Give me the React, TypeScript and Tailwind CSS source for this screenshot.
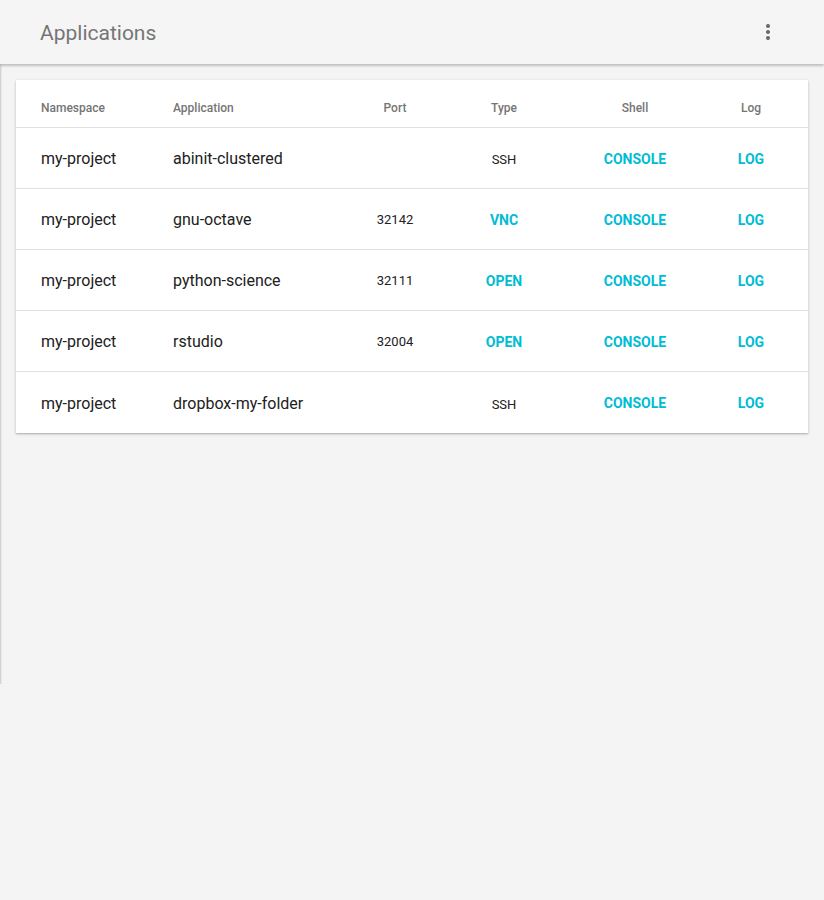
const rows = [
  { ns: "my-project", app: "abinit-clustered", port: "", type: "SSH" },
  { ns: "my-project", app: "gnu-octave", port: "32142", type: "VNC" },
  { ns: "my-project", app: "python-science", port: "32111", type: "OPEN" },
  { ns: "my-project", app: "rstudio", port: "32004", type: "OPEN" },
  { ns: "my-project", app: "dropbox-my-folder", port: "", type: "SSH" },
];

function MoreVert() {
  return (
    <svg width="24" height="24" viewBox="0 0 24 24" fill="#666">
      <circle cx="12" cy="6" r="2" />
      <circle cx="12" cy="12" r="2" />
      <circle cx="12" cy="18" r="2" />
    </svg>
  );
}

export default function App() {
  return (
    <div
      className="min-h-[900px] bg-[#f4f4f4]"
      style={{ fontFamily: "Roboto, 'Liberation Sans', sans-serif" }}
    >
      <div className="h-[684px] shadow-[inset_2px_0_2px_-1px_rgba(0,0,0,0.18)]">
        {/* Header */}
        <header className="relative z-10 flex h-16 items-center justify-between bg-[#f5f5f5] pl-10 pr-11 shadow-[0_2px_2px_rgba(0,0,0,0.14),0_1px_4px_rgba(0,0,0,0.12)]">
          <h1 className="pt-[3px] text-[21px] font-normal text-[#757575]">Applications</h1>
          <MoreVert />
        </header>

        {/* Table card */}
        <div className="px-4 pt-4">
          <div className="bg-white shadow-[0_1px_3px_rgba(0,0,0,0.2),0_1px_1px_rgba(0,0,0,0.12)]">
            <div className="flex h-12 items-center border-b border-[#e0e0e0] pl-[25px] pt-2 text-[12px] font-medium text-[#757575]">
              <div className="w-[132px]">Namespace</div>
              <div className="w-[160px]">Application</div>
              <div className="w-[124px] text-center">Port</div>
              <div className="w-[94px] text-center">Type</div>
              <div className="w-[168px] text-center">Shell</div>
              <div className="w-[64px] text-center">Log</div>
            </div>
            {rows.map((r, i) => (
              <div
                key={r.app}
                className={`flex h-[61px] items-center pl-[25px] pt-[2px] text-[#212121] ${
                  i < rows.length - 1 ? "border-b border-[#e0e0e0]" : ""
                }`}
              >
                <div className="w-[132px] text-[16px]">{r.ns}</div>
                <div className="w-[160px] text-[16px]">{r.app}</div>
                <div className="w-[124px] text-center text-[13px]">{r.port}</div>
                <div className="w-[94px] text-center">
                  {r.type === "SSH" ? (
                    <span className="text-[13px]">SSH</span>
                  ) : (
                    <span className="text-[14px] font-bold text-[#00bcd4]">{r.type}</span>
                  )}
                </div>
                <div className="w-[168px] text-center text-[14px] font-bold text-[#00bcd4]">
                  CONSOLE
                </div>
                <div className="w-[64px] text-center text-[14px] font-bold text-[#00bcd4]">
                  LOG
                </div>
              </div>
            ))}
          </div>
        </div>
      </div>
    </div>
  );
}
